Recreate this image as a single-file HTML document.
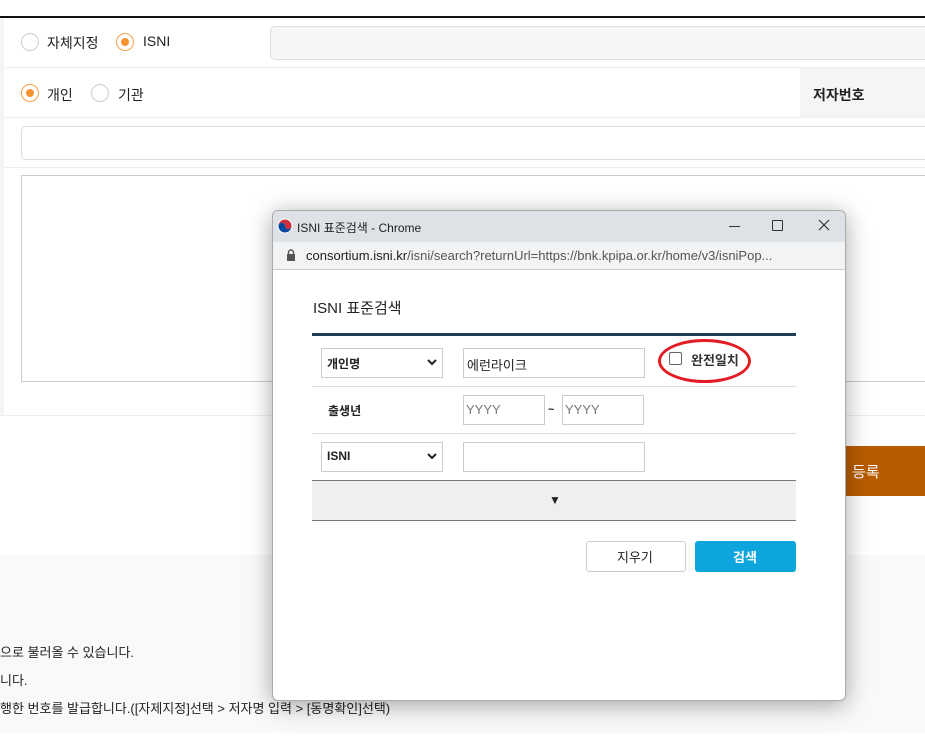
<!DOCTYPE html>
<html><head><meta charset="utf-8"><style>
*{box-sizing:border-box;margin:0;padding:0}
body{width:925px;height:737px;position:relative;overflow:hidden;background:#fff;font-family:"Liberation Sans","Noto Sans CJK KR",sans-serif;color:#222}
.a{position:absolute}
.radio{position:absolute;width:18px;height:18px;border:1px solid #ccc;border-radius:50%;background:#fff}
.radio.on{border-color:#f7a04a}
.radio.on::after{content:"";position:absolute;left:4px;top:4px;width:8px;height:8px;border-radius:50%;background:#f7922f}
.t{position:absolute;font-size:14px;white-space:nowrap}
.box{position:absolute;border:1px solid #ccc;background:#fff}
</style></head><body>
<div class="a" style="left:0;top:16px;width:925px;height:2px;background:#111"></div>
<div class="a" style="left:0;top:18px;width:4px;height:397px;background:#f5f5f5"></div>
<div class="radio" style="left:21px;top:33px"></div><div class="t" style="left:47px;top:33px">자체지정</div>
<div class="radio on" style="left:116px;top:33px"></div><div class="t" style="left:143px;top:33px">ISNI</div>
<div class="a" style="left:270px;top:26px;width:670px;height:34px;border:1px solid #ddd;border-radius:5px;background:#f6f6f6"></div>
<div class="a" style="left:4px;top:67px;width:921px;height:1px;background:#eee"></div>
<div class="radio on" style="left:21px;top:84px"></div><div class="t" style="left:47px;top:85px">개인</div>
<div class="radio" style="left:91px;top:84px"></div><div class="t" style="left:118px;top:85px">기관</div>
<div class="a" style="left:800px;top:68px;width:125px;height:50px;background:#f5f5f5"></div>
<div class="t" style="left:813px;top:85px;font-weight:bold">저자번호</div>
<div class="a" style="left:4px;top:117px;width:921px;height:1px;background:#eee"></div>
<div class="a" style="left:21px;top:126px;width:920px;height:34px;border:1px solid #ddd;border-radius:5px"></div>
<div class="a" style="left:4px;top:167px;width:921px;height:1px;background:#eee"></div>
<div class="a" style="left:21px;top:175px;width:910px;height:207px;border:1px solid #ccc"></div>
<div class="a" style="left:0;top:415px;width:925px;height:1px;background:#eee"></div>
<div class="a" style="left:830px;top:446px;width:95px;height:50px;background:#b85c00"></div>
<div class="t" style="left:852px;top:461px;color:#fff;font-size:15px">등록</div>
<div class="a" style="left:0;top:555px;width:925px;height:178px;background:#f9f9f9"></div>
<div class="t" style="left:0;top:642px;font-size:13px">으로 불러올 수 있습니다.</div>
<div class="t" style="left:0;top:670px;font-size:13px">니다.</div>
<div class="t" style="left:0;top:698px;font-size:13px">행한 번호를 발급합니다.([자제지정]선택 &gt; 저자명 입력 &gt; [동명확인]선택)</div>

<div class="a" style="left:272px;top:210px;width:574px;height:491px;background:#fff;border:1px solid #aaa;border-radius:6px;box-shadow:0 4px 24px rgba(0,0,0,.35);overflow:hidden">
 <div class="a" style="left:0;top:0;width:574px;height:31px;background:#dee1e6"></div>
 <svg class="a" style="left:4px;top:7px" width="16" height="16" viewBox="0 0 16 16"><circle cx="8" cy="8" r="7.5" fill="#fff"/><path d="M1.5 8a6.5 6.5 0 0 1 13 0a3.25 3.25 0 0 1-6.5 0a3.25 3.25 0 0 0-6.5 0z" fill="#cd2e3a"/><path d="M1.5 8a6.5 6.5 0 0 0 13 0a3.25 3.25 0 0 1-6.5 0a3.25 3.25 0 0 0-6.5 0z" fill="#0047a0"/></svg>
 <div class="t" style="left:24px;top:8px;font-size:12px;color:#222">ISNI 표준검색 - Chrome</div>
 <div class="a" style="left:456px;top:15px;width:11px;height:1px;background:#333"></div>
 <div class="a" style="left:499px;top:9px;width:11px;height:11px;border:1px solid #333;border-radius:1px"></div>
 <svg class="a" style="left:545px;top:8px" width="12" height="12" viewBox="0 0 12 12"><path d="M1 1L11 11M11 1L1 11" stroke="#333" stroke-width="1.2"/></svg>
 <div class="a" style="left:0;top:31px;width:574px;height:28px;background:#f1f3f4;border-bottom:1px solid #ccc"></div>
 <svg class="a" style="left:13px;top:38px" width="10" height="12" viewBox="0 0 10 12"><rect x="1" y="5" width="8" height="7" fill="#555"/><path d="M2.5 5V3.5a2.5 2.5 0 0 1 5 0V5" stroke="#555" stroke-width="1.4" fill="none"/></svg>
 <div class="t" style="left:33px;top:37px;font-size:13px;color:#555"><span style="color:#222">consortium.isni.kr</span>/isni/search?returnUrl=https://bnk.kpipa.or.kr/home/v3/isniPop...</div>
 <div class="t" style="left:40px;top:86px;font-size:15px">ISNI 표준검색</div>
 <div class="a" style="left:39px;top:122px;width:484px;height:3px;background:#1f3d57"></div>
 <div class="box" style="left:48px;top:137px;width:122px;height:30px"></div>
 <div class="t" style="left:54px;top:144px;font-size:12px;font-weight:bold">개인명</div>
 <svg class="a" style="left:154px;top:148px" width="10" height="7" viewBox="0 0 10 7"><path d="M1 1l4 4 4-4" stroke="#222" stroke-width="2" fill="none"/></svg>
 <div class="box" style="left:190px;top:137px;width:182px;height:30px"></div>
 <div class="t" style="left:194px;top:144px;font-size:13px">에런라이크</div>
 <div class="a" style="left:396px;top:141px;width:13px;height:13px;border:1px solid #666;border-radius:2px"></div>
 <div class="t" style="left:418px;top:139px;font-size:13px;font-weight:bold;color:#333">완전일치</div>
 <div class="a" style="left:385px;top:128px;width:93px;height:44px;border:3px solid #e31b23;border-radius:50%"></div>
 <div class="a" style="left:39px;top:175px;width:484px;height:1px;background:#ddd"></div>
 <div class="t" style="left:55px;top:191px;font-size:12px;font-weight:bold">출생년</div>
 <div class="box" style="left:190px;top:184px;width:82px;height:30px"></div><div class="t" style="left:193px;top:191px;font-size:13px;color:#777">YYYY</div>
 <div class="t" style="left:275px;top:193px;font-size:11px;font-weight:bold">~</div>
 <div class="box" style="left:289px;top:184px;width:82px;height:30px"></div><div class="t" style="left:292px;top:191px;font-size:13px;color:#777">YYYY</div>
 <div class="a" style="left:39px;top:222px;width:484px;height:1px;background:#ddd"></div>
 <div class="box" style="left:48px;top:231px;width:122px;height:30px"></div>
 <div class="t" style="left:54px;top:238px;font-size:12px;font-weight:bold">ISNI</div>
 <svg class="a" style="left:154px;top:242px" width="10" height="7" viewBox="0 0 10 7"><path d="M1 1l4 4 4-4" stroke="#222" stroke-width="2" fill="none"/></svg>
 <div class="box" style="left:190px;top:231px;width:182px;height:30px"></div>
 <div class="a" style="left:39px;top:269px;width:484px;height:41px;background:#efefef;border-top:1px solid #777;border-bottom:1px solid #777"></div>
 <div class="t" style="left:276px;top:282px;font-size:12px">▼</div>
 <div class="a" style="left:313px;top:330px;width:100px;height:31px;border:1px solid #ccc;border-radius:3px"></div>
 <div class="t" style="left:344px;top:336px;font-size:13px">지우기</div>
 <div class="a" style="left:422px;top:330px;width:101px;height:31px;background:#0ea5dc;border-radius:3px"></div>
 <div class="t" style="left:460px;top:336px;font-size:13px;color:#fff;font-weight:bold">검색</div>
</div>
</body></html>
